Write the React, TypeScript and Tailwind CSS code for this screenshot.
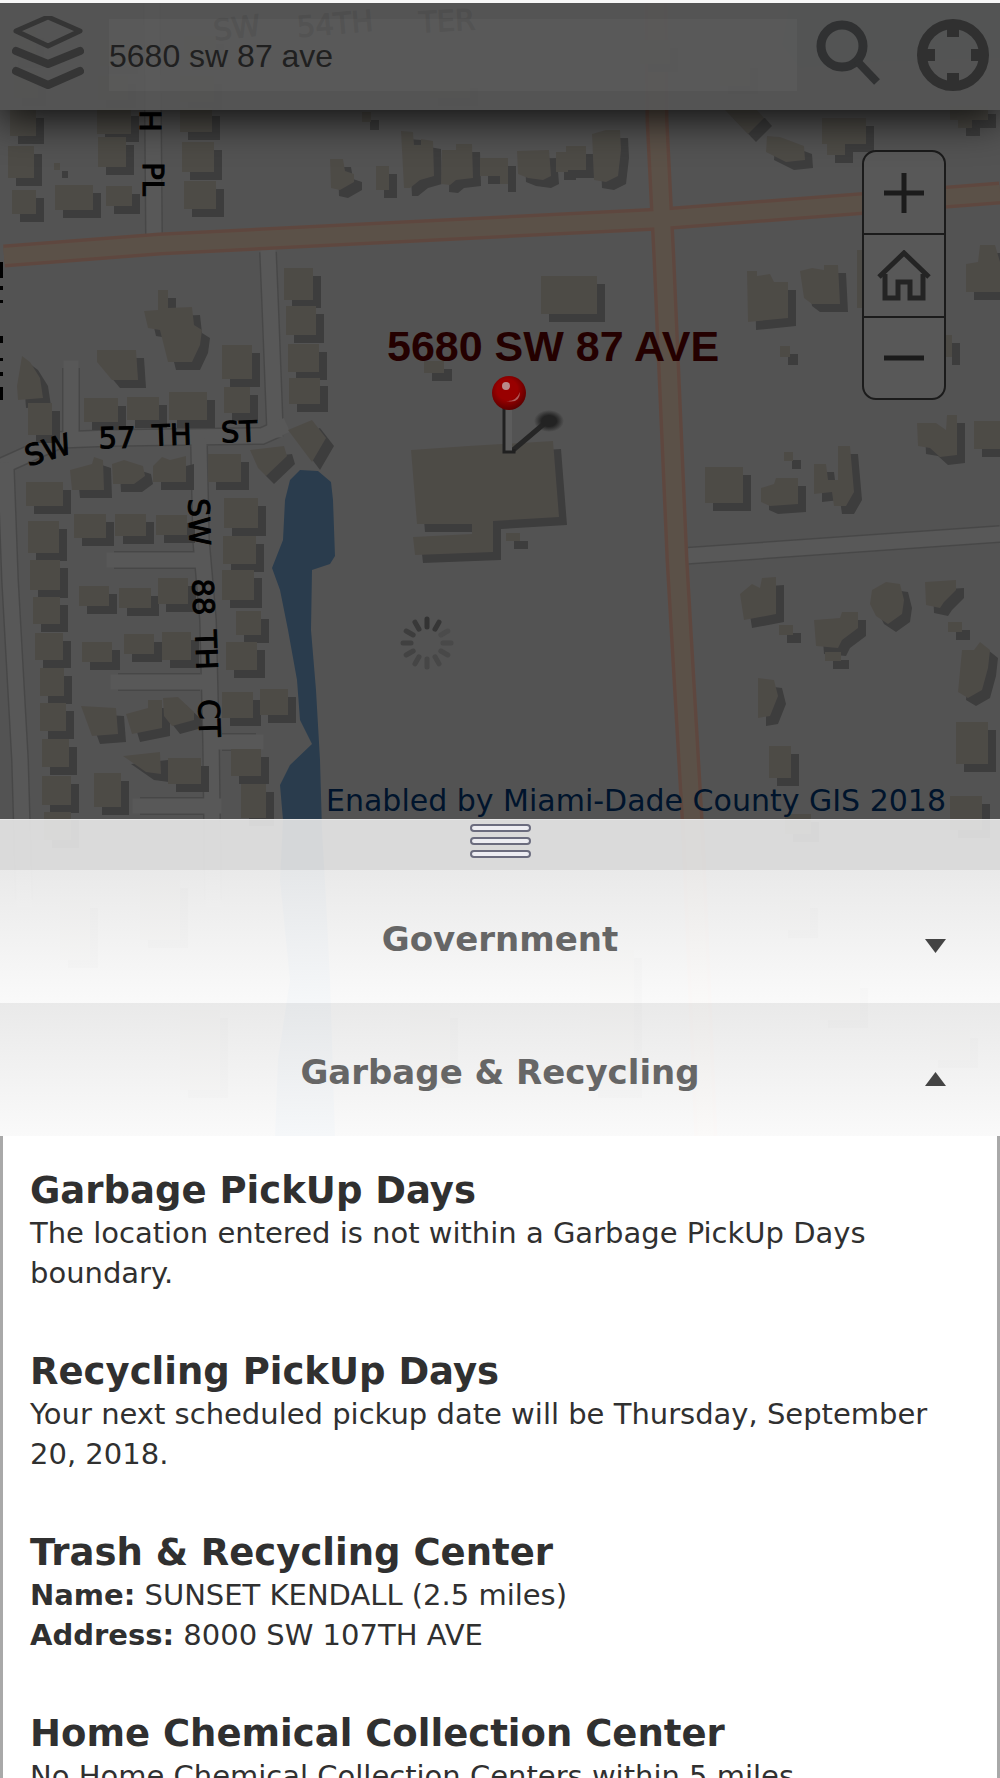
import React, { useState } from 'react';

// Flat-roofed footprints: x, y, width, height
const blocks = [
  [10, 30, 26, 30], [14, 72, 24, 26], [100, 40, 30, 26], [98, 76, 30, 24], [184, 36, 32, 26], [180, 76, 34, 26],
  [10, 110, 26, 26], [8, 146, 26, 32], [12, 190, 24, 24], [97, 108, 34, 26], [98, 137, 28, 30], [55, 185, 38, 25],
  [106, 186, 26, 20], [180, 108, 32, 24], [182, 142, 32, 30], [184, 181, 32, 28], [54, 163, 6, 7], [362, 112, 9, 10],
  [376, 166, 13, 24], [480, 158, 20, 18], [500, 158, 8, 26], [556, 152, 12, 20], [566, 146, 20, 24], [822, 118, 44, 26],
  [827, 140, 18, 15], [950, 106, 38, 14], [958, 116, 14, 12], [640, 40, 30, 24], [720, 60, 30, 26], [430, 80, 40, 18],
  [284, 268, 29, 32], [286, 306, 30, 29], [288, 344, 31, 28], [289, 378, 31, 26], [222, 345, 30, 34],
  [224, 387, 26, 26], [84, 398, 34, 24], [127, 397, 32, 23], [169, 392, 38, 28], [28, 403, 24, 32], [208, 454, 33, 28],
  [26, 482, 37, 24], [28, 521, 31, 32], [74, 514, 32, 24], [115, 514, 31, 22], [156, 515, 31, 20], [224, 498, 34, 30],
  [223, 536, 33, 28], [30, 560, 30, 30], [33, 597, 27, 27], [35, 633, 28, 27], [40, 668, 24, 28], [40, 703, 26, 28],
  [42, 739, 27, 28], [42, 776, 29, 29], [44, 812, 27, 28], [79, 586, 30, 20], [119, 588, 32, 20], [158, 578, 30, 26],
  [82, 642, 30, 20], [124, 634, 30, 20], [162, 632, 29, 28], [168, 758, 33, 26], [94, 773, 27, 34], [222, 570, 32, 30],
  [236, 611, 25, 24], [226, 642, 31, 28], [222, 692, 31, 26], [260, 689, 28, 26], [231, 749, 30, 27],
  [241, 784, 25, 34], [541, 276, 56, 38], [424, 361, 20, 12], [780, 346, 10, 11], [784, 452, 9, 9],
  [857, 250, 8, 58], [944, 335, 8, 22], [705, 467, 38, 36], [974, 421, 26, 28], [779, 625, 14, 10], [825, 652, 16, 9],
  [948, 622, 14, 10], [956, 722, 32, 42], [950, 796, 32, 34], [785, 814, 26, 20], [769, 746, 22, 32],
  [506, 533, 14, 8], [60, 900, 30, 60], [140, 880, 40, 60], [180, 1010, 40, 80], [410, 1010, 40, 70], [590, 950, 44, 140],
  [780, 900, 30, 30], [820, 980, 40, 40], [930, 1030, 40, 30],
];

// Footprints with an irregular outline
const shapes = [
  '330,159 343,159 345,171 354,174 354,182 340,190 331,188',
  '401,131 413,132 414,145 421,145 421,139 433,141 434,176 420,180 410,188 404,188',
  '442,150 456,150 456,144 472,144 473,178 456,180 450,185 441,184',
  '517,151 549,150 551,176 543,180 528,178 518,174',
  '592,134 606,130 620,130 621,150 618,176 606,182 594,180',
  '725,110 757,110 764,118 748,134',
  '767,136 780,137 804,146 805,160 786,162 766,152',
  '144,311 158,310 158,290 168,290 168,308 192,307 194,325 202,330 200,345 192,362 168,362 160,330 148,328',
  '97,350 136,350 138,380 112,380 97,362',
  '22,356 30,362 40,378 43,398 18,400 17,386',
  '288,430 312,420 326,438 312,462',
  '250,450 284,446 287,456 266,476 258,468',
  '70,470 92,464 94,457 103,460 104,490 72,490',
  '112,464 124,460 143,466 145,476 134,484 113,484',
  '153,466 162,457 170,460 186,456 186,482 153,482',
  '81,706 116,708 118,734 92,736',
  '126,714 148,708 148,700 162,700 162,728 132,734',
  '163,698 178,697 194,712 194,720 172,726 164,716',
  '123,756 160,752 161,774 146,772',
  '411,450 468,446 553,441 559,517 493,521 493,552 415,555 413,537 472,534 472,524 417,524',
  '747,271 757,271 757,276 770,274 774,282 788,282 788,318 748,322',
  '800,271 812,268 824,270 824,265 838,265 840,304 812,304 804,298',
  '966,264 978,262 980,245 995,245 1000,262 1000,292 966,292',
  '761,488 774,484 776,478 798,478 798,504 770,506 761,502',
  '814,464 826,464 828,480 838,480 838,446 850,446 854,492 846,506 834,506 832,492 814,494',
  '917,423 936,423 946,430 947,415 957,415 957,455 940,457 930,448 918,446',
  '740,594 752,584 760,588 762,578 776,577 776,614 744,620',
  '814,620 840,618 842,612 858,612 858,628 842,640 838,648 816,646',
  '872,590 886,582 900,584 904,600 902,614 888,624 876,616 870,604',
  '925,582 956,580 956,590 944,602 940,608 926,605',
  '962,650 974,650 980,642 990,650 988,668 982,690 968,698 958,692',
  '758,678 774,680 778,696 770,716 758,718',
];

const whiteRoads = [
  'M152 0 L154 236',
  'M268 252 L270 300 L275 430',
  'M71 368 L71 432',
  'M2 466 L60 440 L110 438 L262 436 L280 428',
  'M199 446 L201 540 L208 620 L211 740 L213 900',
  'M6 470 L10 580 L20 760 L24 900',
  'M114 560 L196 560',
  'M118 682 L200 682',
  'M222 742 L256 742',
  'M140 806 L214 806',
  'M684 556 L1000 534',
];

const orangeRoads = ['M4 256 L160 244 L500 227 L660 219 L1000 193', 'M656 0 L657 120 L664 260 L677 560 L693 835 L706 1140'];

// text, x, y, rotation
const streets: [string, number, number, number][] = [
  ['SW', 237, 28, -7],
  ['54TH', 335, 24, -5],
  ['TER', 447, 21, -3],
  ['H', 150, 121, 90],
  ['PL', 153, 179, 90],
  ['SW', 48, 450, -17],
  ['57', 117, 438, -1],
  ['TH', 172, 435, -2],
  ['ST', 239, 432, -2],
  ['SW', 199, 522, 88],
  ['88', 203, 597, 88],
  ['TH', 206, 650, 88],
  ['CT', 209, 718, 88],
];

function BaseMap() {
  return (
    <svg
      className="absolute inset-x-0 top-0 h-[1137px] w-full"
      viewBox="0 0 1000 1137"
      preserveAspectRatio="xMidYMin slice"
      aria-hidden="true"
    >
      <rect width="1000" height="1137" fill="#dadada" />
      <g fill="none">
        {whiteRoads.map((d) => (
          <path key={d} d={d} stroke="#bcbcbc" strokeWidth="18" />
        ))}
        {whiteRoads.map((d) => (
          <path key={d} d={d} stroke="#e6e6e6" strokeWidth="15" strokeLinecap="square" />
        ))}
        {orangeRoads.map((d) => (
          <path key={d} d={d} stroke="#f7bca6" strokeWidth="23" />
        ))}
        {orangeRoads.map((d) => (
          <path key={d} d={d} stroke="#f0d6bd" strokeWidth="16" />
        ))}
      </g>
      <g fill="#a0a0a0" transform="translate(8 8)">
        {blocks.map(([x, y, w, h]) => (
          <rect key={`${x}-${y}`} x={x} y={y} width={w} height={h} />
        ))}
        {shapes.map((points) => (
          <polygon key={points} points={points} />
        ))}
      </g>
      <g fill="#cbc4b9">
        {blocks.map(([x, y, w, h]) => (
          <rect key={`${x}-${y}`} x={x} y={y} width={w} height={h} />
        ))}
        {shapes.map((points) => (
          <polygon key={points} points={points} />
        ))}
      </g>
      <path d="M790 0H1000V58L870 62L800 68L782 45Z" fill="#b4c3d8" />
      <path
        d="M290 480L300 470L318 471L331 482L333 500L335 556L330 564L312 570L311 630L316 690L320 760L322 830L326 900L330 980L335 1137H275L278 1060L290 980L280 880L283 820L280 785L290 765L312 744L300 720L297 680L288 630L280 590L272 568L283 540L285 500Z"
        fill="#6e9ecb"
      />
      {/* tile edge marks */}
      <path d="M1 262V278M1 286V290M1 300V303M1 336V343M1 358V361M1 372V376M1 387V400" stroke="#000" strokeWidth="4" />
      <g fontFamily="DejaVu Sans, sans-serif" fontSize="29" textAnchor="middle" stroke="#000" strokeWidth="1">
        {streets.map(([text, x, y, r]) => (
          <text key={`${text}-${y}`} x={x} y={y} dy="10" transform={`rotate(${r} ${x} ${y})`}>
            {text}
          </text>
        ))}
      </g>
    </svg>
  );
}

function Pin() {
  return (
    <svg width="72" height="80" viewBox="0 0 72 80" aria-hidden="true">
      <defs>
        <radialGradient id="shade" cx="50%" cy="50%" r="50%">
          <stop offset="0.5" stopColor="#232323" />
          <stop offset="1" stopColor="#232323" stopOpacity="0" />
        </radialGradient>
        <radialGradient id="ball" cx="45%" cy="40%" r="60%">
          <stop offset="0.5" stopColor="#990000" />
          <stop offset="1" stopColor="#5e0000" />
        </radialGradient>
      </defs>
      <path d="M20 75L53 47" stroke="#262626" strokeWidth="5" />
      <ellipse cx="57" cy="45" rx="15" ry="11" fill="url(#shade)" />
      <rect x="13" y="32" width="7" height="43" fill="#5c5c5c" />
      <path d="M12 32V76H22V73" fill="none" stroke="#202020" strokeWidth="3" />
      <circle cx="17" cy="17" r="17" fill="url(#ball)" />
      <circle cx="14" cy="10" r="4" fill="#b98a8a" />
      <path d="M14 25Q24 26 28 16Q28 28 14 25Z" fill="#b05a5a" />
    </svg>
  );
}

const spokes = ['#333', '#363636', '#4b4b4b', '#494949', '#484848', '#474747', '#464646', '#454545', '#434343', '#404040', '#3d3d3d', '#393939'];

function Spinner() {
  return (
    <svg width="54" height="54" viewBox="-27 -27 54 54" aria-hidden="true">
      {spokes.map((color, i) => (
        <path key={i} d="M0 -24V-16" stroke={color} strokeWidth="5" strokeLinecap="round" transform={`rotate(${i * 30})`} />
      ))}
    </svg>
  );
}

function Header() {
  return (
    <header className="relative z-10 flex h-[110px] items-center border-t-[3px] border-[#f7f7f7] bg-[#555555]/92 pb-1 shadow-[0_8px_40px_rgba(0,0,0,0.85)]">
      <button type="button" aria-label="Layers" className="flex w-[109px] justify-start pl-3">
        <svg width="72" height="78" viewBox="0 3 72 78" fill="none" stroke="#353535" strokeLinejoin="round" strokeLinecap="round">
          <path d="M4 18L36 4L68 18L36 33Z" strokeWidth="5" />
          <path d="M4 38L36 51L68 38" strokeWidth="8" />
          <path d="M4 58L36 72L68 58" strokeWidth="8" />
        </svg>
      </button>
      <input
        type="text"
        aria-label="Address search"
        defaultValue="5680 sw 87 ave"
        className="h-[72px] min-w-0 flex-1 bg-white/3 pt-1 font-['Liberation_Sans',sans-serif] text-[32px] text-[#202020] outline-none"
      />
      <button type="button" aria-label="Search" className="flex w-[108px] justify-center">
        <svg width="72" height="72" viewBox="0 0 72 72" fill="none" stroke="#303132">
          <circle cx="27" cy="27" r="21" strokeWidth="9" />
          <path d="M42 42L62 63" strokeWidth="8" />
        </svg>
      </button>
      <button type="button" aria-label="My location" className="flex w-[95px] justify-center">
        <svg width="72" height="72" viewBox="0 0 72 72" fill="none" stroke="#303030">
          <circle cx="36" cy="36" r="31" strokeWidth="10" />
          <path d="M36 8V18M36 54V64M8 36H18M54 36H64" strokeWidth="12" />
        </svg>
      </button>
    </header>
  );
}

function ZoomControl() {
  return (
    <div className="absolute right-[54px] top-[150px] flex w-[84px] flex-col divide-y-2 divide-[#1b1b1b] overflow-hidden rounded-[14px] border-2 border-[#1b1b1b] bg-[#585858]">
      <button type="button" aria-label="Zoom in" className="flex h-[83px] items-center justify-center">
        <svg width="40" height="40" viewBox="0 0 40 40" stroke="#1b1b1b" strokeWidth="5">
          <path d="M20 0V40M0 20H40" />
        </svg>
      </button>
      <button type="button" aria-label="Default extent" className="flex h-[83px] items-center justify-center">
        <svg width="54" height="52" viewBox="0 0 54 52" fill="none" stroke="#242424" strokeWidth="5">
          <path d="M2 27L27 3L52 27" />
          <path d="M8 24V48H21V32H33V48H46V24" />
        </svg>
      </button>
      <button type="button" aria-label="Zoom out" className="flex h-[80px] items-center justify-center">
        <svg width="40" height="40" viewBox="0 0 40 40" stroke="#1b1b1b" strokeWidth="5">
          <path d="M0 20H40" />
        </svg>
      </button>
    </div>
  );
}

interface SectionHeaderProps {
  title: string;
  open: boolean;
  onToggle: () => void;
}

function SectionHeader({ title, open, onToggle }: SectionHeaderProps) {
  return (
    <button
      type="button"
      aria-expanded={open}
      onClick={onToggle}
      className="relative flex h-[133px] w-full shrink-0 items-center justify-center bg-linear-to-b from-[#eaeaea]/96 to-[#fbfbfb]/96 pt-1.5 text-[34px] font-bold text-[#666666]"
    >
      {title}
      <svg className="absolute right-[54px] top-[68px]" width="21" height="16" viewBox="0 0 21 16" fill="#444444" aria-hidden="true">
        <path d={open ? 'M0 15L10.5 1L21 15Z' : 'M0 1L10.5 15L21 1Z'} />
      </svg>
    </button>
  );
}

function Service({ title, children }: { title: string; children: React.ReactNode }) {
  return (
    <section>
      <h2 className="text-[37px] font-bold leading-[45px]">{title}</h2>
      <div className="text-[29px] leading-[40px]">{children}</div>
    </section>
  );
}

export default function App() {
  const [government, setGovernment] = useState(false);
  const [garbage, setGarbage] = useState(true);

  return (
    <div className="relative flex h-screen flex-col overflow-hidden bg-white font-['DejaVu_Sans',sans-serif] text-[#303030]">
      <BaseMap />

      <div className="relative h-[819px] shrink-0 bg-black/62">
        <Header />
        <div className="absolute left-[387px] top-[322px] whitespace-nowrap font-['Liberation_Sans',sans-serif] text-[43px] font-bold leading-[48px] text-[#240000]">
          5680 SW 87 AVE
        </div>
        <div className="absolute left-[492px] top-[376px]">
          <Pin />
        </div>
        <div className="absolute left-[400px] top-[616px]">
          <Spinner />
        </div>
        <ZoomControl />
        <p className="absolute bottom-0 right-[54px] whitespace-nowrap text-[30px] leading-[36px] text-[#00142c]">
          Enabled by Miami-Dade County GIS 2018
        </p>
      </div>

      <button type="button" aria-label="Resize panel" className="relative flex h-[51px] shrink-0 justify-center border-t border-[#e6e6e6] bg-[#dadada]/96 pt-1">
        <svg width="61" height="35" viewBox="0 0 61 35" fill="#ededf2" stroke="#6b6c7e" strokeWidth="2" aria-hidden="true">
          <rect x="1" y="1" width="59" height="6" rx="3" />
          <rect x="1" y="14" width="59" height="6" rx="3" />
          <rect x="1" y="27" width="59" height="6" rx="3" />
        </svg>
      </button>

      <SectionHeader title="Government" open={government} onToggle={() => setGovernment(!government)} />
      <SectionHeader title="Garbage & Recycling" open={garbage} onToggle={() => setGarbage(!garbage)} />

      {garbage && (
        <div className="relative flex min-h-0 flex-1 flex-col gap-14 overflow-hidden border-x-[3px] border-[#a9a9a9] bg-white px-[27px] pt-8">
          <Service title="Garbage PickUp Days">
            <p>The location entered is not within a Garbage PickUp Days boundary.</p>
          </Service>
          <Service title="Recycling PickUp Days">
            <p>Your next scheduled pickup date will be Thursday, September 20, 2018.</p>
          </Service>
          <Service title="Trash & Recycling Center">
            <p>
              <strong>Name:</strong> SUNSET KENDALL (2.5 miles)
            </p>
            <p>
              <strong>Address:</strong> 8000 SW 107TH AVE
            </p>
          </Service>
          <Service title="Home Chemical Collection Center">
            <p>No Home Chemical Collection Centers within 5 miles.</p>
          </Service>
        </div>
      )}
    </div>
  );
}
